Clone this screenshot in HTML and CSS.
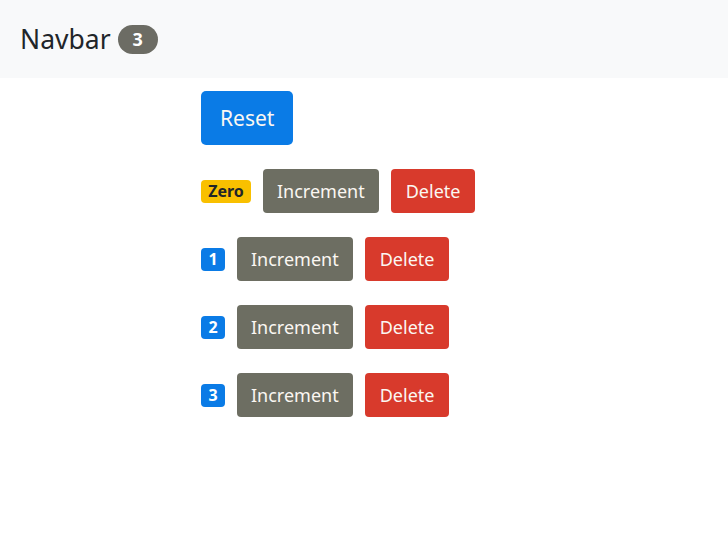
FILE: index.html
```html
<!DOCTYPE html>
<html>
<head>
<meta charset="utf-8">
<link rel="stylesheet" href="styles.css">
</head>
<body>
<nav class="navbar">
  <span class="brand">Navbar</span>
  <span class="pill">3</span>
</nav>
<main class="content">
  <button class="btn btn-lg btn-primary">Reset</button>
  <div class="row">
    <span class="badge badge-warning">Zero</span>
    <button class="btn btn-secondary">Increment</button>
    <button class="btn btn-danger">Delete</button>
  </div>
  <div class="row">
    <span class="badge badge-primary">1</span>
    <button class="btn btn-secondary">Increment</button>
    <button class="btn btn-danger">Delete</button>
  </div>
  <div class="row">
    <span class="badge badge-primary">2</span>
    <button class="btn btn-secondary">Increment</button>
    <button class="btn btn-danger">Delete</button>
  </div>
  <div class="row">
    <span class="badge badge-primary">3</span>
    <button class="btn btn-secondary">Increment</button>
    <button class="btn btn-danger">Delete</button>
  </div>
</main>
</body>
</html>
```
FILE: styles.css
```css
* { box-sizing: border-box; }
body {
  margin: 0;
  font-family: "Noto Sans", "Open Sans", sans-serif;
  background: #fff;
  color: #212529;
}
.navbar {
  height: 78px;
  background: #f8f9fa;
  display: flex;
  align-items: center;
  padding-left: 20px;
  gap: 7px;
}
.brand {
  font-size: 26.5px;
  color: #212529;
}
.pill {
  display: inline-flex;
  align-items: center;
  justify-content: center;
  width: 40px;
  height: 29px;
  border-radius: 15px;
  background: #6c6c64;
  color: #fff;
  font-weight: 700;
  font-size: 18px;
}
.content {
  padding: 13px 0 0 201px;
  display: flex;
  flex-direction: column;
  align-items: flex-start;
  gap: 24px;
}
.row {
  display: flex;
  align-items: center;
  gap: 12px;
}
.btn {
  border: none;
  font-family: inherit;
  color: #fbf7f2;
  height: 44px;
  padding: 0 14px;
  font-size: 18px;
  border-radius: 4px;
}
.btn-lg {
  height: 54px;
  padding: 0 19px;
  font-size: 21px;
  border-radius: 5px;
}
.btn-primary { background: #0a7be6; }
.btn-secondary { background: #6d6e62; }
.btn-danger { background: #d83a2c; padding: 0 15px; }
.badge {
  display: inline-flex;
  align-items: center;
  justify-content: center;
  height: 23px;
  border-radius: 4px;
  font-weight: 700;
  font-size: 16px;
}
.badge-warning {
  background: #f9c000;
  color: #212529;
  width: 50px;
}
.badge-primary {
  background: #0a7be6;
  color: #fff;
  width: 24px;
}
```
